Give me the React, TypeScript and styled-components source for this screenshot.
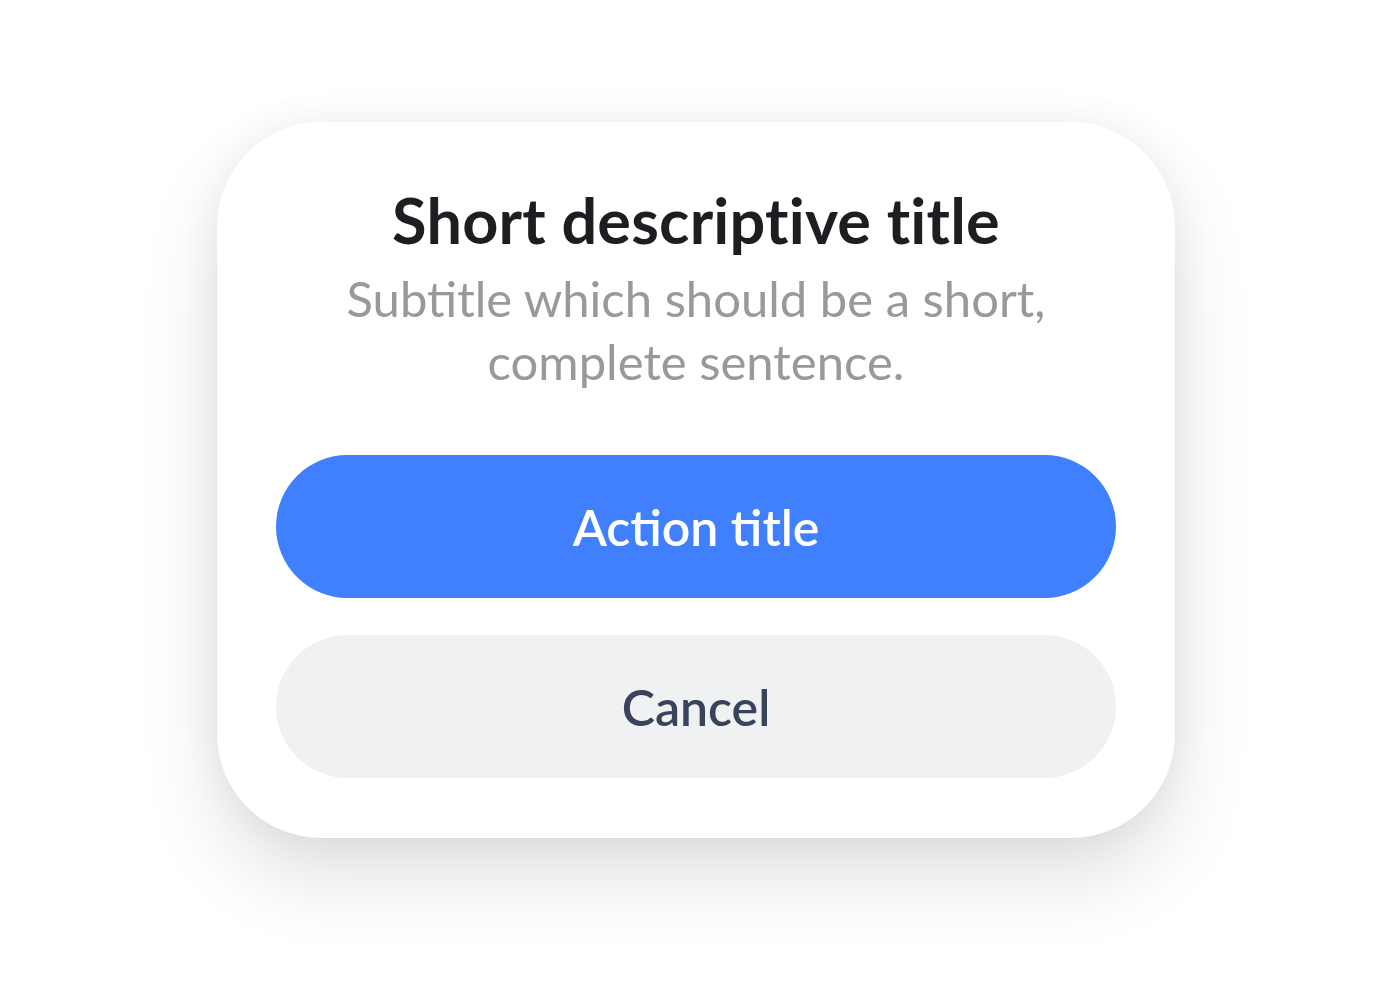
import React from 'react';
import styled, { createGlobalStyle } from 'styled-components';

const GlobalStyle = createGlobalStyle`
  html, body {
    margin: 0;
    padding: 0;
    background: #ffffff;
  }
  body {
    font-family: 'Lato', 'Inter', sans-serif;
    -webkit-font-smoothing: antialiased;
  }
`;

const Page = styled.div`
  width: 1392px;
  height: 983px;
  display: flex;
  justify-content: center;
  align-items: flex-start;
  padding-top: 122px;
  box-sizing: border-box;
`;

const Sheet = styled.div`
  width: 958px;
  height: 716px;
  box-sizing: border-box;
  background: #ffffff;
  border-radius: 104px;
  box-shadow:
    0 0 2px rgba(0, 0, 0, 0.03),
    0 0 40px rgba(0, 0, 0, 0.05),
    0 40px 80px rgba(0, 0, 0, 0.12);
  padding: 58px 59px 60px;
  display: flex;
  flex-direction: column;
  align-items: center;
`;

const Title = styled.h1`
  margin: 0;
  font-size: 63px;
  line-height: 80px;
  font-weight: 700;
  color: #1e1e22;
  text-align: center;
  letter-spacing: 0.2px;
`;

const Subtitle = styled.p`
  margin: 7px 0 0;
  max-width: 760px;
  font-size: 49px;
  line-height: 63px;
  font-weight: 400;
  color: #999999;
  text-align: center;
`;

const Actions = styled.div`
  margin-top: auto;
  width: 100%;
  display: flex;
  flex-direction: column;
  gap: 37px;
`;

const Button = styled.button<{ $variant: 'primary' | 'secondary' }>`
  width: 100%;
  height: 143px;
  border: none;
  border-radius: 72px;
  background: ${p => (p.$variant === 'primary' ? '#4080ff' : '#f0f1f3')};
  color: ${p => (p.$variant === 'primary' ? '#ffffff' : '#39445c')};
  font-family: 'Lato', 'Inter', sans-serif;
  font-size: 50px;
  font-weight: 600;
  cursor: pointer;
  display: flex;
  align-items: center;
  justify-content: center;
`;

export default function App() {
  return (
    <>
      <GlobalStyle />
      <Page>
        <Sheet>
          <Title>Short descriptive title</Title>
          <Subtitle>Subtitle which should be a short, complete sentence.</Subtitle>
          <Actions>
            <Button $variant="primary">Action title</Button>
            <Button $variant="secondary">Cancel</Button>
          </Actions>
        </Sheet>
      </Page>
    </>
  );
}
